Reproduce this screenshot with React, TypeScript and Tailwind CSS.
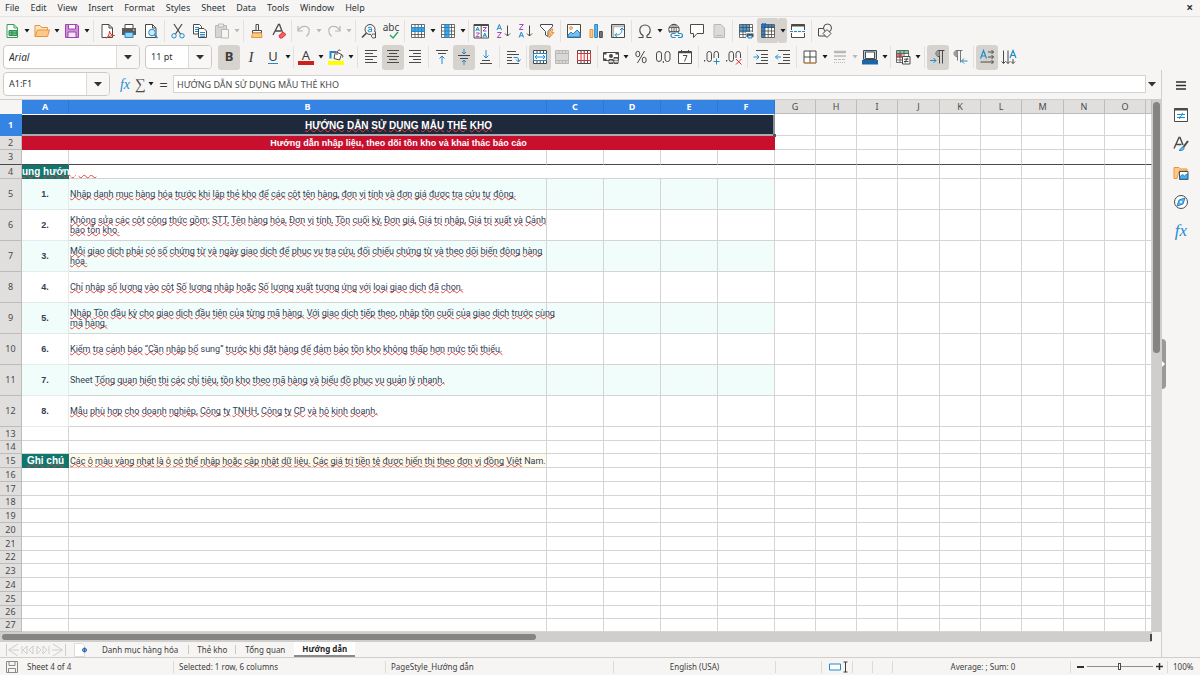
import type { ReactNode } from "react"

const UI = "font-['Noto_Sans','Open_Sans',sans-serif]"
const CELL = "font-['Liberation_Sans',Arial,sans-serif]"
const BODY = "font-['Roboto','Liberation_Sans',sans-serif]"

const D = "#4a4a48"
const B = "#1e8bcd"
const G = "#b9b8b6"
const R = "#e0312e"
const O = "#e8953c"

function lines(ys: number[], xs: [number, number][], color: string) {
  return ys.map((y, i) => <path key={y} d={`M${xs[i % xs.length][0]} ${y}H${xs[i % xs.length][1]}`} stroke={color} />)
}

const gridPath = "M1.5 1.5h13v13h-13zM1.5 4.5h13M1.5 8h13M1.5 11.5h13M5 1.5v13M8.2 1.5v13M11.5 1.5v13"

const icons: Record<string, ReactNode> = {
  newDoc: (
    <>
      <path d="M3 1.500h7l3.500 3.500v9.500h-10.500z" fill="#fff" stroke="#3a9b5c" />
      <path d="M10 1.500v3.500h3.500" stroke="#3a9b5c" />
      <path d="M5 7.500h8v5h-8z" fill="#6fc08a" stroke="#2f8f50" />
      <path d="M5 10h8M8 7.500v5" stroke="#2f8f50" />
    </>
  ),
  open: (
    <>
      <path d="M1 13.500v-11h5l1.500 2h6v3" fill="#fbe3c4" stroke={O} />
      <path d="M1 13.500l2.500-6.500h12l-2 6.500z" fill="#fbc98a" stroke={O} />
    </>
  ),
  save: (
    <>
      <path d="M1.500 1.500h11.500l1.500 1.500v11.500h-13z" fill="#cf8fdc" stroke="#9a46ad" />
      <path d="M4.500 1.500h7v4.500h-7z" fill="#fff" stroke="#9a46ad" />
      <path d="M4 9h8v5.500h-8z" fill="#f5e6f8" stroke="#9a46ad" />
    </>
  ),
  pdf: (
    <>
      <path d="M3 1.500h7l3.500 3.500v9.500h-10.500z" fill="#fff" stroke={D} />
      <path d="M10 1.500v3.500h3.500" stroke={D} />
      <path d="M7.500 15c2-2 3-4 3-7 .5 3 2 4.500 5 4.500-3 0-5.500.5-8 2.500z" fill="#fff" stroke={R} />
    </>
  ),
  print: (
    <>
      <path d="M4 5.500v-4h8v4" fill="#fff" stroke={D} />
      <path d="M1 5h14v7h-14z" fill="#5a5a58" />
      <path d="M4 9.500h8v5h-8z" fill="#9fd0f2" stroke={B} />
      <path d="M12 7h1.500" stroke="#fff" />
    </>
  ),
  preview: (
    <>
      <path d="M2.500 1.500h7l3.500 3.500v9.500h-10.500z" fill="#fff" stroke={D} />
      <path d="M9.500 1.500v3.500h3.500" stroke={D} />
      <circle cx="9" cy="9.500" r="3.300" fill="#cfe8fa" stroke={B} />
      <path d="M11.500 12l3 3" stroke={B} strokeWidth="1.500" />
    </>
  ),
  cut: (
    <>
      <path d="M4 1l6.500 10M12 1l-6.500 10" stroke={D} strokeWidth="1.200" />
      <circle cx="4" cy="12.800" r="2.200" stroke={B} />
      <circle cx="12" cy="12.800" r="2.200" stroke={B} />
    </>
  ),
  copy: (
    <>
      <path d="M1.500 1.500h6l2 2v7.500h-8z" fill="#fff" stroke={D} />
      <path d="M3 4.500h4M3 6.500h3M3 8.500h3" stroke={B} />
      <path d="M6.500 5.500h5.500l2.500 2.500v6.500h-8z" fill="#fff" stroke={D} />
      <path d="M8 9.500h5M8 11.500h5M8 13.200h5" stroke={B} />
    </>
  ),
  paste: (
    <>
      <path d="M1.500 2.500h11v12h-11z" fill="#d6d5d3" stroke={G} />
      <path d="M4.500 1h5v3h-5z" fill="#eee" stroke={G} />
      <path d="M7.500 6.500h7v8.500h-7z" fill="#f6f5f4" stroke={G} />
    </>
  ),
  brush: (
    <>
      <path d="M7 1.500h2.500v6h-2.500z" stroke={D} />
      <path d="M3.500 7.500h9v2.500h-9z" stroke={D} fill="#fff" />
      <path d="M3.500 10h9l.5 4.500h-10.500z" fill="#fbc98a" stroke={O} />
    </>
  ),
  clearFmt: (
    <>
      <path d="M2 12l5.500-10.500h1l3 8M4.500 8h5.500" stroke={D} strokeWidth="1.300" />
      <path d="M8 12.500l4-3.500 3 2.500-4 3.500h-2z" fill="#f0616a" stroke={R} />
    </>
  ),
  undo: <path d="M2 3v5h5M2 8c2-4 5-5 8-4.500 4 1 4.500 6 .5 10" stroke={G} strokeWidth="1.200" />,
  redo: <path d="M14 3v5h-5M14 8c-2-4-5-5-8-4.500-4 1-4.500 6-.5 10" stroke={G} strokeWidth="1.200" />,
  find: (
    <>
      <circle cx="9" cy="6.500" r="5" stroke={D} />
      <path d="M5.500 10l-4.500 4.500" stroke={D} strokeWidth="1.600" />
      <path d="M7 5c1-1 3.500-1 3.500.5v3.200M10.500 6.500c-2-.2-3.500.3-3.500 1.300 0 1.300 2.500 1.300 3.500 0" stroke={B} />
      <path d="M10 9h6v7h-6z" fill="#f6f5f4" />
      <path d="M14.500 8.500v6.500M14.500 12c-.5-1.500-4-1.500-4 1s3.500 2.500 4 1" stroke={D} />
    </>
  ),
  rows: (
    <>
      <path d="M1.500 1.500h13v13h-13z" fill="#fff" />
      <path d={gridPath} stroke={D} strokeWidth=".8" />
      <path d="M1.500 4.500h13v4h-13z" fill="#4aa3e0" stroke={B} />
      <path d="M5 4.500v4M8.200 4.500v4M11.500 4.500v4" stroke={B} />
    </>
  ),
  cols: (
    <>
      <path d="M1.500 1.500h13v13h-13z" fill="#fff" />
      <path d={gridPath} stroke={D} strokeWidth=".8" />
      <path d="M5 1.500h4v13h-4z" fill="#4aa3e0" stroke={B} />
      <path d="M5 4.500h4M5 8h4M5 11.500h4" stroke={B} />
    </>
  ),
  sort: (
    <>
      <path d="M1 1.500h14.500v13.500h-14.500zM8.200 1.500v13.500" stroke={D} fill="#fff" />
      <path d="M1 1.500h14.500v1.500h-14.500z" fill={D} />
      <path d="M2.800 8l1.800-4 1.800 4M3.500 6.800h2.300M10 14l1.800-4 1.800 4M10.700 12.800h2.300" stroke={B} />
      <path d="M10 4.500h3.500l-3.500 3.500h3.500M3 10h3.500l-3.500 3.700h3.500" stroke="#a347ba" />
    </>
  ),
  sortAsc: (
    <>
      <path d="M2 7l2.300-5.500 2.300 5.500M3 5.300h2.700" stroke={B} />
      <path d="M2.300 9.500h4l-4 5h4" stroke="#a347ba" />
      <path d="M12.500 2.500v10.500M10 10.500l2.500 2.500 2.500-2.500" stroke={D} />
    </>
  ),
  sortDesc: (
    <>
      <path d="M2.300 1.500h4l-4 5h4" stroke="#a347ba" />
      <path d="M2 14.500l2.300-5.500 2.300 5.500M3 12.800h2.700" stroke={B} />
      <path d="M12.500 2.500v10.500M10 10.500l2.500 2.500 2.500-2.500" stroke={D} />
    </>
  ),
  filter: (
    <>
      <path d="M1.500 1.500h12v2l-4.500 5v5l-2.500-1.500v-3.500l-5-5z" fill="#fff" stroke={D} />
      <path d="M12.500 6l-3.500 5h2.500l-1.500 4 5-5.500h-2.500l1.500-3.500z" fill="#fbc98a" stroke={O} />
    </>
  ),
  image: (
    <>
      <path d="M1.500 1.500h13v13h-13z" fill="#fff" stroke={D} />
      <circle cx="5" cy="5" r="1.500" fill="#fbc98a" stroke={O} strokeWidth=".8" />
      <path d="M2 14v-2l3-3 2 2 4-4 3 3v4z" fill="#7cbcec" stroke={B} />
    </>
  ),
  chart: (
    <>
      <path d="M2 6.500h2.800v8h-2.800z" fill="#fbc98a" stroke={O} />
      <path d="M6.700 1.500h2.800v13h-2.800z" fill="#6ab2e7" stroke={B} />
      <path d="M11.500 8.500h2.800v6h-2.800z" fill="#777" stroke={D} />
    </>
  ),
  pivot: (
    <>
      <path d="M1.500 1.500h13v13h-13z" fill="#fff" stroke={D} />
      <path d="M2 3.200h12M3.200 3v11" stroke={G} strokeWidth="2" />
      <path d="M6 12c4 0 6-2 6-6M4.800 12l2-2M4.800 12l2 2M12 5l-2 2M12 5l2 2" stroke={B} />
    </>
  ),
  omega: <path d="M1.500 14.500h4.500v-2c-2-1.200-3.200-3-3.200-5.300 0-3 2.200-5.200 5.200-5.200s5.200 2.200 5.200 5.200c0 2.300-1.200 4.100-3.200 5.300v2h4.500" stroke={D} strokeWidth="1.100" />,
  link: (
    <>
      <circle cx="7" cy="6.500" r="5.200" stroke={D} />
      <ellipse cx="7" cy="6.500" rx="2.300" ry="5.200" stroke={D} strokeWidth=".8" />
      <path d="M2 4.500h10M2 8.500h10M7 1v10" stroke={D} strokeWidth=".8" />
      <path d="M3 10h13v6h-13z" fill="#f6f5f4" />
      <path d="M8.500 14.500h-2.500a2 2 0 010-4h2.500M11 10.500h2.500a2 2 0 010 4h-2.500M7.500 12.500h5" stroke={B} strokeWidth="1.200" />
    </>
  ),
  comment: <path d="M1.500 1.500h13v9h-6.500l-3.500 4v-4h-3z" fill="#fff" stroke={D} />,
  header: (
    <>
      <path d="M3 1.500h7l3.500 3.500v9.500h-10.500z" fill="#dcdbd9" stroke={G} />
      <path d="M5 12.500h6.500" stroke={G} />
    </>
  ),
  printArea: (
    <>
      <path d="M1.500 1.500h13v13h-13z" fill="#fff" />
      <path d="M1.500 1.500h10v8h-10z" fill="#4aa3e0" />
      <path d={gridPath} stroke={D} strokeWidth=".8" />
      <path d="M8 9h8v7h-8z" fill="#f6f5f4" />
      <path d="M8.500 10.500h7v3.500h-7z" fill="#4a4a48" />
      <path d="M10 12.500h4v2.500h-4z" fill="#bfe0f6" stroke={B} />
    </>
  ),
  freeze: (
    <>
      <path d="M2 2h12.500v12.500h-12.500z" fill="#fff" />
      <path d="M2 2h12.500v3h-9.500v10h-3z" fill="#2f86d6" />
      <path d={gridPath} stroke={D} strokeWidth=".8" />
      <path d="M1 1.500h6M4 0v6M1.800 0l4.400 4M6 0l-4.500 4" stroke="#1b6bb8" />
    </>
  ),
  split: (
    <>
      <path d="M1.500 1.500h13v13h-13z" stroke={D} fill="#fff" />
      <path d="M1.500 2.500h13" stroke={D} strokeWidth="2" />
      <path d="M0 8.500h16" stroke="#f6f5f4" strokeWidth="3" />
      <path d="M0 8.500h16" stroke={B} strokeDasharray="3 1" />
    </>
  ),
  shapes: (
    <>
      <path d="M1.500 5.500h7.500v7.500h-7.500z" stroke={D} />
      <circle cx="10.500" cy="5" r="4" stroke={D} fill="#f6f5f4" />
      <path d="M10 6.500l4 4-4 4-4-4z" fill="#f6f5f4" stroke={D} />
    </>
  ),
  alignLeft: <>{lines([1.5, 4.5, 7.5, 10.5, 13.5], [[2, 14], [2, 10]], D)}</>,
  alignCenter: <>{lines([1.5, 4.5, 7.5, 10.5, 13.5], [[2, 14], [4, 12]], D)}</>,
  alignRight: <>{lines([1.5, 4.5, 7.5, 10.5, 13.5], [[2, 14], [6, 14]], D)}</>,
  top: (
    <>
      {lines([1.5, 4.5], [[2, 14], [4, 12]], D)}
      <path d="M8 15v-8M5.500 9.500l2.500-2.500 2.500 2.500" stroke={B} />
    </>
  ),
  middle: (
    <>
      {lines([6.5, 9.5], [[2, 14], [4, 12]], D)}
      <path d="M8 0v5M6 3l2 2 2-2M8 16v-5M6 13l2-2 2 2" stroke={B} />
    </>
  ),
  bottom: (
    <>
      {lines([11.5, 14.5], [[4, 12], [2, 14]], D)}
      <path d="M8 1v8M5.500 6.500l2.500 2.500 2.500-2.500" stroke={B} />
    </>
  ),
  wrap: (
    <>
      {lines([2.5, 5.5, 8.5, 11.5, 14.5], [[2, 11], [2, 14], [2, 7], [2, 7], [2, 14]], D)}
      <path d="M8.500 8.500h3.500c1.500 0 1.500 2 1.500 4M11 10.500l2.500 2.500 2-2.500" stroke={B} />
    </>
  ),
  merge: (
    <>
      <path d="M1.500 1.500h13v13h-13zM1.500 4.500h13M1.500 11.500h13M5 1.500v3M8.200 1.500v3M11.500 1.500v3M5 11.500v3M8.200 11.500v3M11.500 11.500v3" fill="#fff" stroke={D} />
      <path d="M1.500 4.500h13v7h-13z" fill="#fff" stroke={B} />
      <path d="M3 8h10M5 6l-2 2 2 2M11 6l2 2-2 2" stroke={B} />
    </>
  ),
  mergeOff: <path d="M1.500 1.500h13v13h-13zM1.500 4.500h13M1.500 11.500h13M5 1.500v3M8.200 1.500v3M11.500 1.500v3M5 11.500v3M8.200 11.500v3M11.500 11.500v3" fill="#d9d8d6" stroke={G} />,
  unmerge: (
    <>
      <path d="M1.500 1.500h13v13h-13zM5 1.500v3M8.200 1.500v3M11.500 1.500v3M5 11.500v3M8.200 11.500v3M11.500 11.500v3" fill="#fff" stroke={D} />
      <path d="M1.500 4.500h13v7h-13zM5 4.500v7M8.200 4.500v7M11.500 4.500v7" fill="#fff" stroke={R} />
    </>
  ),
  currency: (
    <>
      <path d="M.5 3.500h15v8h-15z" fill="#fff" stroke={D} />
      <circle cx="8" cy="7" r="2" fill={D} />
      <path d="M.5 3.500h3v2h-3zM12.500 3.500h3v2h-3zM.5 9.500h3v2h-3z" fill={D} />
      <path d="M6 10.500h4v4h-4zM11 8.500h4v6h-4z" fill="#999" stroke={D} />
      <path d="M6 12.500h4M11 10.500h4M11 12.500h4" stroke="#fff" strokeWidth=".7" />
    </>
  ),
  percent: (
    <>
      <ellipse cx="4.800" cy="5" rx="2" ry="2.800" stroke={D} />
      <ellipse cx="11.200" cy="11" rx="2" ry="2.800" stroke={D} />
      <path d="M11.500 2l-7 12" stroke={D} />
    </>
  ),
  number: (
    <>
      <rect x="1.500" y="2.500" width="5" height="10" rx="2.500" stroke={D} />
      <rect x="10" y="2.500" width="5" height="10" rx="2.500" stroke={D} />
      <path d="M8.300 12v2" stroke={D} />
    </>
  ),
  date: (
    <>
      <path d="M1.500 2.500h13v12h-13z" fill="#fff" stroke={D} />
      <path d="M1.500 3.500h13" stroke={D} strokeWidth="1.500" />
      <path d="M4.500 1v3M11.500 1v3M6 6.500h4l-2.500 6" stroke={D} />
    </>
  ),
  addDec: (
    <>
      <path d="M.5 11v1.500" stroke={D} strokeWidth="1.500" />
      <rect x="3" y="2.500" width="4.500" height="10" rx="2.200" stroke={D} />
      <path d="M10 9v-4.300a2.200 2.200 0 014.500 0v4.300" stroke={D} />
      <path d="M12.500 9.500v6M9.500 12.500h6" stroke={B} />
    </>
  ),
  delDec: (
    <>
      <path d="M.5 11v1.500" stroke={D} strokeWidth="1.500" />
      <rect x="3" y="2.500" width="4.500" height="10" rx="2.200" stroke={D} />
      <path d="M10 9v-4.300a2.200 2.200 0 014.500 0v4.300" stroke={D} />
      <path d="M10 10l5.500 5.500M15.500 10l-5.500 5.500" stroke={R} />
    </>
  ),
  indent: (
    <>
      {lines([1.5, 5.5, 8.5, 11.5, 14.5], [[3, 15], [8, 15], [8, 15], [8, 15], [3, 15]], D)}
      <path d="M.5 8h5.500M3.500 5.500l2.500 2.500-2.500 2.500" stroke={B} />
    </>
  ),
  outdent: (
    <>
      {lines([1.5, 5.5, 8.5, 11.5, 14.5], [[3, 15], [8, 15], [8, 15], [8, 15], [3, 15]], D)}
      <path d="M.5 8h5.500M3 5.500l-2.500 2.500 2.500 2.500" stroke={B} />
    </>
  ),
  borders: (
    <>
      <path d="M2 2h12v12h-12zM8 2v12M2 8h12" fill="#fff" stroke={D} />
      <path d="M2 14h12" stroke={O} />
    </>
  ),
  borderStyle: (
    <>
      <path d="M2 3h12" stroke={G} strokeWidth="2.500" />
      <path d="M2 7h12" stroke={G} strokeWidth="1.500" />
      <path d="M2 10.500h12" stroke={G} strokeDasharray="3 1" />
      <path d="M2 13.500h12" stroke={G} strokeDasharray="1 1" />
    </>
  ),
  borderColor: (
    <>
      <path d="M1.500 1.500h13v9h-13z" fill="#a9d3f3" stroke={D} />
      <path d="M3.500 3h9v6.500h-9z" fill="#fff" stroke={D} />
      <path d="M0 11h16v4.500h-16z" fill="#1b66a8" />
    </>
  ),
  conditional: (
    <>
      <path d="M1.500 1.500h12v12h-12z" fill="#fff" />
      <path d="M1.500 1.500h12v3h-12z" fill="#7ed09a" />
      <path d="M1.500 5h6v3.500h-6z" fill="#f0616a" />
      <path d="M1.500 1.500h12v12h-12zM1.500 4.500h12M1.500 8h12M1.500 11h12M5 1.500v12M9 1.500v12" stroke={D} strokeWidth=".8" />
      <path d="M7.500 7.500h7.500v7.500h-7.500z" fill="#fff" stroke={D} />
      <path d="M9 10.200h4.500M9 12.500h4.500M12.500 8.800l-2.500 5" stroke={D} />
    </>
  ),
  ltr: (
    <>
      <path d="M14.500 1.500h-5.500c-4 0-4 6 0 6h.5M9.500 1.500v13M12.500 1.500v13" stroke={D} />
      <path d="M9.500 2h-1.500c-2.500 0-2.500 5 0 5h1.500z" fill="#999" />
      <path d="M0 11.500h6M3.500 9l2.500 2.500-2.500 2.500" stroke={B} />
    </>
  ),
  rtl: (
    <>
      <path d="M10.500 1.500h-5.500c-4 0-4 6 0 6h.5M5.500 1.500v10M8.500 1.500v12" stroke="#777" />
      <path d="M5.500 2h-1.500c-2.500 0-2.500 5 0 5h1.500z" fill="#999" />
      <path d="M15.500 12h-6M12 9.500l-2.500 2.500 2.500 2.500" stroke={B} />
    </>
  ),
  textLR: (
    <>
      <path d="M1.500 9.500l3-8 3 8M2.500 7h4" stroke={B} strokeWidth="1.200" />
      <path d="M9 3h5.500M9 8h5.500M1.500 13h13M12.500 1l2 2-2 2M12.500 6l2 2-2 2M12.500 11l2 2-2 2" stroke={D} />
    </>
  ),
  textTB: (
    <>
      <path d="M9 9l3-7.500 3 7.500M10 6.500h4" stroke={B} strokeWidth="1.200" />
      <path d="M2.500 1.500v13M7 1.500v13M12 10v4.500M.5 12.500l2 2 2-2M5 12.500l2 2 2-2M10 12.500l2 2 2-2" stroke={D} />
    </>
  ),
  bucket: (
    <>
      <path d="M7.500 2.500l6 3-2 5.500-5.500-1.500z" fill="#fff" stroke={D} />
      <path d="M9 6c-.5-4 2-6 3.500-4.500M13.500 5.500c2 1 1.500 2 1 3" stroke={D} />
      <path d="M2.500 9.500v-6.500h4.500" stroke={B} strokeWidth="2" />
      <path d="M0 12h16v4h-16z" fill="#ffff00" />
    </>
  ),
  properties: (
    <>
      <path d="M1.500 1.500h13v13h-13z" fill="#fff" stroke={D} />
      <path d="M1.500 2.500h13" stroke={D} strokeWidth="2" />
      <path d="M4 7.500h8M4 10.500h8M9.500 5.800l-1 3M7.500 9l-1 3" stroke={B} />
    </>
  ),
  styles: (
    <>
      <path d="M1 12.500l5-11h1l3 7.500M3 8.500h5.500" stroke={D} strokeWidth="1.400" />
      <path d="M15 5l-4.500 6" stroke={D} strokeWidth="2" />
      <path d="M6 14.500c1.500 0 1.500-3.500 4-3.500 2.500 1 .5 4-4 3.500z" fill="#7cbcec" stroke={B} />
    </>
  ),
  gallery: (
    <>
      <path d="M1 13.500v-11h5l1.500 1.500h6.500v2h-8l-2 7.500z" fill="#fbc98a" stroke={O} />
      <path d="M6.500 6.500h8.500v8h-8.500z" fill="#fff" stroke={D} />
      <path d="M7 14v-2.500l2.500-2 2 1.500 3-2.500v5.500z" fill="#5aa9e3" stroke={B} />
    </>
  ),
  navigator: (
    <>
      <circle cx="8" cy="8" r="6.500" fill="#fff" stroke={D} />
      <path d="M12 4l-2 6-6 2 2-6z" fill="#6ab2e7" stroke={B} />
      <circle cx="8" cy="8" r="1" fill="#fff" />
    </>
  ),
}

function Icon({ name }: { name: string }) {
  return (
    <svg viewBox="0 0 16 16" fill="none" className="h-4 w-4" aria-hidden="true">
      {icons[name]}
    </svg>
  )
}

function Tool({ name, label, active, children }: { name?: string; label: string; active?: boolean; children?: ReactNode }) {
  return (
    <button
      aria-label={label}
      className={`flex h-[25px] w-[22px] shrink-0 items-center justify-center rounded-[3px] ${active ? "bg-[#d6d3cf]" : ""}`}
    >
      {name ? <Icon name={name} /> : children}
    </button>
  )
}

function Arrow({ dim, active }: { dim?: boolean; active?: boolean }) {
  return (
    <button aria-label="More options" className={`flex h-[25px] w-2 shrink-0 items-center justify-center ${active ? "rounded-r-[3px] bg-[#d6d3cf]" : ""}`}>
      <svg viewBox="0 0 6 4" className={`h-1 w-[6px] ${dim ? "fill-[#b9b8b6]" : "fill-[#1a1a1a]"}`} aria-hidden="true">
        <path d="M.5 0h5L3 3.500z" />
      </svg>
    </button>
  )
}

function Sep({ slim }: { slim?: boolean }) {
  return (
    <div className={`flex h-[22px] shrink-0 justify-center ${slim ? "w-[3px]" : "w-[5px]"}`}>
      <div className="w-px bg-[#e3e1de]" />
    </div>
  )
}

function Combo({ label, value, className, inputClass }: { label: string; value: string; className: string; inputClass?: string }) {
  return (
    <div className={`flex h-6 shrink-0 overflow-hidden rounded-[4px] border border-[#cdc9c5] bg-white ${className}`}>
      <input aria-label={label} defaultValue={value} className={`min-w-0 flex-1 px-[5px] text-[#2e3436] outline-none ${inputClass ?? "text-[9px]"}`} />
      <button aria-label={`${label} list`} className="flex w-[23px] items-center justify-center border-l border-[#dddad7] bg-[#f8f7f6]">
        <svg viewBox="0 0 8 5" className="h-[5px] w-2 fill-[#2e3436]" aria-hidden="true">
          <path d="M0 0h8L4 4.500z" />
        </svg>
      </button>
    </div>
  )
}

// words the spell checker accepts
const known = ["Sheet", "sung”", "Nam."]

function Spell({ text }: { text: string }) {
  return (
    <>
      {text.split(" ").map((word, i) => (
        <span key={i}>
          {i > 0 && " "}
          <span className={known.includes(word) ? "" : "-underline-offset-1 underline decoration-[#e04040] decoration-wavy decoration-1 [text-decoration-skip-ink:none]"}>{word}</span>
        </span>
      ))}
    </>
  )
}

const columns = [
  { name: "A", width: "w-[47px]" },
  { name: "B", width: "w-[478px]" },
  { name: "C", width: "w-[57px]" },
  { name: "D", width: "w-[57px]" },
  { name: "E", width: "w-[57px]" },
  { name: "F", width: "w-[57px]" },
  { name: "G", width: "w-[41px]" },
  { name: "H", width: "w-[41px]" },
  { name: "I", width: "w-[41px]" },
  { name: "J", width: "w-[42px]" },
  { name: "K", width: "w-[41px]" },
  { name: "L", width: "w-[41px]" },
  { name: "M", width: "w-[42px]" },
  { name: "N", width: "w-[41px]" },
  { name: "O", width: "w-[41px]" },
  { name: "", width: "" },
]

const guide = [
  ["Nhập danh mục hàng hóa trước khi lập thẻ kho để các cột tên hàng, đơn vị tính và đơn giá được tra cứu tự động."],
  ["Không sửa các cột công thức gồm: STT, Tên hàng hóa, Đơn vị tính, Tồn cuối kỳ, Đơn giá, Giá trị nhập, Giá trị xuất và Cảnh", "báo tồn kho."],
  ["Mỗi giao dịch phải có số chứng từ và ngày giao dịch để phục vụ tra cứu, đối chiếu chứng từ và theo dõi biến động hàng", "hóa."],
  ["Chỉ nhập số lượng vào cột Số lượng nhập hoặc Số lượng xuất tương ứng với loại giao dịch đã chọn."],
  ["Nhập Tồn đầu kỳ cho giao dịch đầu tiên của từng mã hàng. Với giao dịch tiếp theo, nhập tồn cuối của giao dịch trước cùng", "mã hàng."],
  ["Kiểm tra cảnh báo “Cần nhập bổ sung” trước khi đặt hàng để đảm bảo tồn kho không thấp hơn mức tối thiểu."],
  ["Sheet Tổng quan hiển thị các chỉ tiêu, tồn kho theo mã hàng và biểu đồ phục vụ quản lý nhanh."],
  ["Mẫu phù hợp cho doanh nghiệp, Công ty TNHH, Công ty CP và hộ kinh doanh."],
]

const line = "border-r border-b border-[#d4d4d4] p-0"

function RowHead({ n, active }: { n: number; active?: boolean }) {
  return (
    <th
      scope="row"
      className={`${UI} border-r border-b p-0 text-center text-[9px] leading-[12px] ${
        active ? "border-[#3584e4] bg-[#3584e4] font-bold text-white" : "border-[#bdbcba] bg-[#e1dfdd] font-normal text-[#4a4a4a]"
      } ${n === 3 ? "border-b-[#4a4a4a]" : ""}`}
    >
      {n}
    </th>
  )
}

function Blank({ count, dark, tint }: { count: number; dark?: boolean; tint?: boolean }) {
  return (
    <>
      {Array.from({ length: count }, (_, i) => (
        <td key={i} className={`${line} ${dark ? "border-b-[#4a4a4a]" : ""} ${tint ? "bg-[#f0fdfa]" : ""}`} />
      ))}
    </>
  )
}

function Sheet() {
  return (
    <table className={`${BODY} w-full table-fixed border-separate border-spacing-0 bg-white text-[9px] leading-[10px] text-[#334155]`}>
      <colgroup>
        <col className="w-[22px]" />
        {columns.map((c, i) => (
          <col key={i} className={c.width} />
        ))}
      </colgroup>
      <thead>
        <tr className={`h-[14px] ${UI} text-[9px] leading-[12px]`}>
          <th className="bg-[#f6f5f4] p-0" aria-label="Select all" />
          {columns.map((c, i) => (
            <th
              key={i}
              scope="col"
              className={`border-r border-b p-0 ${i < 6 ? "border-[#2f78d0] border-b-[#3584e4] bg-[#3584e4] font-bold text-white" : "border-[#bdbcba] bg-[#e1dfdd] font-normal text-[#4a4a4a]"}`}
            >
              {c.name}
            </th>
          ))}
        </tr>
      </thead>
      <tbody>
        <tr className="h-[22px]">
          <RowHead n={1} active />
          <td colSpan={6} className={`${CELL} relative bg-[#1e293b] p-0 pt-px text-center text-[10px] font-bold text-white`}>
            <Spell text="HƯỚNG DẪN SỬ DỤNG MẪU THẺ KHO" />
            <div className="absolute inset-0 border-t border-r-2 border-b-2 border-t-white border-r-[#8a8f98] border-b-[#a9abb0]" />
            <div className="absolute -right-px -bottom-px h-[3px] w-[3px] bg-[#555]" />
          </td>
          <Blank count={10} />
        </tr>
        <tr className="h-[14px]">
          <RowHead n={2} />
          <td colSpan={6} className={`${CELL} bg-[#c8102e] p-0 text-center font-bold text-white`}>
            Hướng dẫn nhập liệu, theo dõi tồn kho và khai thác báo cáo
          </td>
          <Blank count={10} />
        </tr>
        <tr className="h-[15px]">
          <RowHead n={3} />
          <Blank count={16} dark />
        </tr>
        <tr className="h-[14px]">
          <RowHead n={4} />
          <td className={`${CELL} bg-[#0f766e] p-0 text-[10px] font-bold whitespace-nowrap text-white`}>
            <Spell text="ung hướng dẫn" />
          </td>
          <td colSpan={5} className={line} />
          <Blank count={10} />
        </tr>
        {guide.map((text, i) => (
          <tr key={i} className="h-[31px]">
            <RowHead n={i + 5} />
            <td className={`${CELL} border-r border-b border-[#e4ebea] p-0 text-center font-bold ${i % 2 ? "" : "bg-[#f0fdfa]"}`}>{i + 1}.</td>
            <td className={`${line} pl-px whitespace-nowrap ${i % 2 ? "" : "bg-[#f0fdfa]"}`}>
              {text.map((t) => (
                <div key={t}>
                  <Spell text={t} />
                </div>
              ))}
            </td>
            <Blank count={4} tint={i % 2 === 0} />
            <Blank count={10} />
          </tr>
        ))}
        {[14, 13, 14, 14, 14, 13, 14, 14, 14, 13, 14, 14, 14, 13, 13].map((h, i) => (
          <tr key={i} className={h === 14 ? "h-[14px]" : "h-[13px]"}>
            <RowHead n={i + 13} />
            {i === 2 ? (
              <>
                <td className={`${CELL} bg-[#0f766e] p-0 text-center text-[10px] font-bold text-white`}>
                  <Spell text="Ghi chú" />
                </td>
                <td className={`${line} bg-[#fffbeb] pl-px whitespace-nowrap`}>
                  <Spell text="Các ô màu vàng nhạt là ô có thể nhập hoặc cập nhật dữ liệu. Các giá trị tiền tệ được hiển thị theo đơn vị đồng Việt Nam." />
                </td>
                <Blank count={14} />
              </>
            ) : (
              <Blank count={16} />
            )}
          </tr>
        ))}
      </tbody>
    </table>
  )
}

function FormatBar() {
  return (
    <div className="flex h-[26px] items-center pl-[3px]">
      <Combo label="Font name" value="Arial" className="w-[137px]" inputClass="text-[10px] italic" />
      <Combo label="Font size" value="11 pt" className="mr-[6px] ml-[5px] w-[67px]" />
      <Tool label="Bold" active>
        <span className="text-[13px] font-bold text-[#3d3d3d]">B</span>
      </Tool>
      <Tool label="Italic">
        <span className="font-['Liberation_Serif',serif] text-[15px] text-[#3d3d3d] italic">I</span>
      </Tool>
      <Tool label="Underline">
        <span className="border-b border-[#1e8bcd] text-[13px] leading-[13px] text-[#3d3d3d]">U</span>
      </Tool>
      <Arrow />
      <Sep slim />
      <Tool label="Font color">
        <span className="w-4 border-b-4 border-[#c9211e] text-center text-[13px] leading-[12px] text-[#3d3d3d]">A</span>
      </Tool>
      <Arrow />
      <Tool name="bucket" label="Highlighting" />
      <Arrow />
      <Sep />
      <Tool name="alignLeft" label="Align left" />
      <Tool name="alignCenter" label="Center" active />
      <Tool name="alignRight" label="Align right" />
      <Sep />
      <Tool name="top" label="Align top" />
      <Tool name="middle" label="Center vertically" active />
      <Tool name="bottom" label="Align bottom" />
      <Sep />
      <Tool name="wrap" label="Wrap text" />
      <Sep />
      <Tool name="merge" label="Merge and center" active />
      <Tool name="mergeOff" label="Merge cells" />
      <Tool name="unmerge" label="Unmerge cells" />
      <Sep />
      <Tool name="currency" label="Currency" />
      <Arrow />
      <Tool name="percent" label="Percent" />
      <Tool name="number" label="Number" />
      <Tool name="date" label="Date" />
      <Sep />
      <Tool name="addDec" label="Add decimal place" />
      <Tool name="delDec" label="Delete decimal place" />
      <Sep />
      <Tool name="indent" label="Increase indent" />
      <Tool name="outdent" label="Decrease indent" />
      <Sep />
      <Tool name="borders" label="Borders" />
      <Arrow />
      <Tool name="borderStyle" label="Border style" />
      <Arrow dim />
      <Tool name="borderColor" label="Border color" />
      <Arrow />
      <Sep slim />
      <Tool name="conditional" label="Conditional formatting" />
      <Arrow />
      <Sep />
      <Tool name="ltr" label="Left-to-right" active />
      <Tool name="rtl" label="Right-to-left" />
      <Sep />
      <Tool name="textLR" label="Text direction left to right" active />
      <Tool name="textTB" label="Text direction top to bottom" />
    </div>
  )
}

function StandardBar() {
  return (
    <div className="flex h-[27px] items-center pl-px">
      <Tool name="newDoc" label="New" />
      <Arrow />
      <Tool name="open" label="Open" />
      <Arrow />
      <Tool name="save" label="Save" />
      <Arrow />
      <Sep />
      <Tool name="pdf" label="Export as PDF" />
      <Tool name="print" label="Print" />
      <Tool name="preview" label="Print preview" />
      <Sep />
      <Tool name="cut" label="Cut" />
      <Tool name="copy" label="Copy" />
      <Tool name="paste" label="Paste" />
      <Arrow dim />
      <Sep />
      <Tool name="brush" label="Clone formatting" />
      <Tool name="clearFmt" label="Clear formatting" />
      <Sep slim />
      <Tool name="undo" label="Undo" />
      <Arrow dim />
      <Tool name="redo" label="Redo" />
      <Arrow dim />
      <Sep />
      <Tool name="find" label="Find and replace" />
      <Tool label="Spelling">
        <span className="relative text-[10px] leading-[10px] text-[#3d3d3d]">
          <span className="block pb-[7px]">abc</span>
          <svg viewBox="0 0 10 8" className="absolute right-0 bottom-0 h-2 w-[10px]" fill="none" aria-hidden="true">
            <path d="M1 4l3 3 5-6" stroke="#2fa35c" strokeWidth="1.300" />
          </svg>
        </span>
      </Tool>
      <Sep />
      <Tool name="rows" label="Row" />
      <Arrow />
      <Tool name="cols" label="Column" />
      <Arrow />
      <Sep slim />
      <Tool name="sort" label="Sort" />
      <Tool name="sortAsc" label="Sort ascending" />
      <Tool name="sortDesc" label="Sort descending" />
      <Tool name="filter" label="AutoFilter" />
      <Sep />
      <Tool name="image" label="Insert image" />
      <Tool name="chart" label="Insert chart" />
      <Tool name="pivot" label="Pivot table" />
      <Sep />
      <Tool name="omega" label="Special character" />
      <Arrow />
      <Tool name="link" label="Hyperlink" />
      <Tool name="comment" label="Comment" />
      <Tool name="header" label="Headers and footers" />
      <Sep />
      <Tool name="printArea" label="Define print area" />
      <Tool name="freeze" label="Freeze rows and columns" active />
      <Arrow active />
      <Tool name="split" label="Split window" />
      <Sep />
      <Tool name="shapes" label="Show draw functions" />
    </div>
  )
}

function FormulaBar() {
  return (
    <div className="flex h-7 items-center pl-[3px]">
      <Combo label="Name box" value="A1:F1" className="w-[107px]" />
      <button aria-label="Function wizard" className="ml-[7px] w-4 font-['Liberation_Serif',serif] text-[14px] text-[#1e8bcd] italic">
        fx
      </button>
      <button aria-label="Select function" className="w-[14px] font-['Liberation_Serif',serif] text-[15px] leading-[16px] text-[#4a4a48]">
        ∑
      </button>
      <Arrow />
      <button aria-label="Formula" className="mr-[2px] ml-px w-[15px] text-[15px] leading-[16px] text-[#3d3d3d]">
        =
      </button>
      <input
        aria-label="Formula input"
        defaultValue="HƯỚNG DẪN SỬ DỤNG MẪU THẺ KHO"
        className="h-[18px] min-w-0 flex-1 border border-[#d5d2cf] bg-white px-[3px] text-[9px] text-[#4a4a4a] outline-none"
      />
      <button aria-label="Expand formula bar" className="flex w-[15px] items-center justify-center pr-[3px]">
        <svg viewBox="0 0 8 5" className="h-[5px] w-2 fill-[#2e3436]" aria-hidden="true">
          <path d="M0 0h8L4 4.500z" />
        </svg>
      </button>
    </div>
  )
}

function SheetTabs() {
  return (
    <div className="flex h-[15px] items-center text-[8px] text-[#3d3d3d]">
      <svg viewBox="0 0 62 14" className="ml-[5px] h-[14px] w-[62px]" fill="none" stroke="#cfcdca" aria-hidden="true">
        <path d="M1.500 1v12M13 1L3.500 7 13 13M5 7h9M17 3v8M22 3l-4 4 4 4zM28 3l-4 4 4 4zM32 3l4 4-4 4zM38 3l4 4-4 4zM44 3v8M48 1l9.500 6L48 13M47 7h9M60.500 1v12" />
      </svg>
      <button aria-label="Add sheet" className="ml-[7px] flex w-[14px]">
        <svg viewBox="0 0 14 14" className="h-[14px] w-[14px]" fill="none" aria-hidden="true">
          <path d="M.5.5h8l2 2v11h-10z" fill="#fff" stroke="#dedcda" />
          <circle cx="10.500" cy="7" r="2" stroke="#2a66b5" />
          <path d="M10.500 5v4M8.500 7h4" stroke="#2a66b5" />
        </svg>
      </button>
      <nav className="ml-[6px] flex h-full items-center" aria-label="Sheets">
        <button className="pr-[10px] pl-2">Danh mục hàng hóa</button>
        <span className="h-[9px] w-px bg-[#cbc9c6]" />
        <button className="px-2">Thẻ kho</button>
        <span className="h-[9px] w-px bg-[#cbc9c6]" />
        <button className="px-[9px]">Tổng quan</button>
        <button className="h-full border-b-2 border-[#8a8a88] bg-white px-2 font-bold text-[#1f1f1f]">Hướng dẫn</button>
      </nav>
    </div>
  )
}

function StatusBar() {
  return (
    <footer className="flex h-[18px] items-center border-t border-[#d0cecb] text-[8px] text-[#3d3d3d]">
      <svg viewBox="0 0 12 12" className="mr-[9px] ml-[6px] h-3 w-3" fill="none" stroke="#8a8a88" aria-hidden="true">
        <path d="M.5.5h11v11h-11zM3 .5v4h6v-4M2.500 11.500v-4h7v4" />
      </svg>
      <span className="w-[146px]">Sheet 4 of 4</span>
      <span className="h-3 w-px bg-[#dddbd8]" />
      <span className="w-[211px] pl-[5px]">Selected: 1 row, 6 columns</span>
      <span className="h-3 w-px bg-[#dddbd8]" />
      <span className="w-[227px] pl-[5px]">PageStyle_Hướng dẫn</span>
      <span className="h-3 w-px bg-[#dddbd8]" />
      <span className="flex-1 text-center">English (USA)</span>
      <span className="h-3 w-px bg-[#dddbd8]" />
      <span className="w-[45px]" />
      <span className="h-3 w-px bg-[#dddbd8]" />
      <svg viewBox="0 0 30 12" className="h-3 w-[30px]" fill="none" aria-hidden="true">
        <path d="M7.500 3h11v6h-11z" fill="#fff" stroke="#1e8bcd" />
        <path d="M21.500 1h4M23.500 1v10M21.500 11h4" stroke="#3d3d3d" />
      </svg>
      <span className="h-3 w-px bg-[#dddbd8]" />
      <span className="w-[19px]" />
      <span className="h-3 w-px bg-[#dddbd8]" />
      <span className="w-[19px]" />
      <span className="h-3 w-px bg-[#dddbd8]" />
      <span className="w-[177px] pl-[3px] text-center">Average: ; Sum: 0</span>
      <span className="h-3 w-px bg-[#dddbd8]" />
      <button aria-label="Zoom out" className="ml-[6px] w-[7px]">
        <span className="block h-[2px] bg-[#2e2e2e]" />
      </button>
      <input
        type="range"
        aria-label="Zoom"
        defaultValue={49}
        className="mx-[3px] h-[9px] w-[66px] appearance-none bg-[linear-gradient(#8f8d8a,#8f8d8a)] bg-[length:100%_1px] bg-center bg-no-repeat [&::-webkit-slider-thumb]:h-[7px] [&::-webkit-slider-thumb]:w-[3px] [&::-webkit-slider-thumb]:appearance-none [&::-webkit-slider-thumb]:border [&::-webkit-slider-thumb]:border-[#4a4a4a] [&::-webkit-slider-thumb]:bg-white"
      />
      <button aria-label="Zoom in" className="flex w-[7px]">
        <svg viewBox="0 0 7 7" className="h-[7px] w-[7px]" stroke="#2e2e2e" strokeWidth="1.500" aria-hidden="true">
          <path d="M0 3.500h7M3.500 0v7" />
        </svg>
      </button>
      <span className="ml-1 h-3 w-px bg-[#dddbd8]" />
      <span className="w-8 pl-[5px]">100%</span>
    </footer>
  )
}

export default function App() {
  return (
    <div className={`${UI} flex min-h-screen flex-col overflow-hidden bg-[#f6f5f4] text-[#2e3436]`}>
      <header className="flex h-[17px] items-center border-b border-[#e6e4e2] text-[9px]">
        {["File", "Edit", "View", "Insert", "Format", "Styles", "Sheet", "Data", "Tools", "Window", "Help"].map((m) => (
          <button key={m} className="pr-[6px] pl-[5px]">
            {m}
          </button>
        ))}
        <button aria-label="Close document" className="mr-[7px] ml-auto text-[12px] leading-[12px] font-bold">
          ×
        </button>
      </header>
      <StandardBar />
      <FormatBar />
      <div className="flex flex-1">
        <main className="flex min-w-0 flex-1 flex-col border-r border-[#d0cecb]">
          <FormulaBar />
          <div className="mt-px flex flex-1 border-t border-[#d0cecb]">
            <div className="min-w-0 flex-1">
              <Sheet />
            </div>
            <div className="w-[9px] bg-[#cfcecd] px-px pt-[2px]">
              <div className="h-[251px] rounded-full bg-[#858483]" />
            </div>
          </div>
          <div className="mr-[9px] flex h-[10px] items-center bg-[#cfcecd] pl-[2px]">
            <div className="h-[6px] w-[534px] rounded-full bg-[#858483]" />
            <div className="ml-auto h-[7px] w-[2px] bg-[#4a4a48]" />
          </div>
          <SheetTabs />
        </main>
        <div className="flex w-1 items-center">
          <div className="flex h-[50px] w-1 items-center rounded-r-sm bg-[#9a9998]">
            <svg viewBox="0 0 3 6" className="h-[6px] w-[3px] fill-white" aria-hidden="true">
              <path d="M0 0l3 3-3 3z" />
            </svg>
          </div>
        </div>
        <aside className="flex w-[34px] flex-col items-center pt-[7px] pr-[4px]">
          <button aria-label="Sidebar settings" className="mb-[7px] flex h-4 w-5 items-center justify-center">
            <svg viewBox="0 0 10 9" className="h-[9px] w-[10px]" stroke="#2e2e2e" strokeWidth="1.500" aria-hidden="true">
              <path d="M0 1h10M0 4.500h10M0 8h10" />
            </svg>
          </button>
          {["properties", "styles", "gallery", "navigator"].map((n) => (
            <button key={n} aria-label={n} className="flex h-[29px] w-5 items-center justify-center">
              <Icon name={n} />
            </button>
          ))}
          <button aria-label="Functions" className="h-[29px] font-['Liberation_Serif',serif] text-[17px] text-[#1e8bcd] italic">
            fx
          </button>
        </aside>
      </div>
      <StatusBar />
    </div>
  )
}
